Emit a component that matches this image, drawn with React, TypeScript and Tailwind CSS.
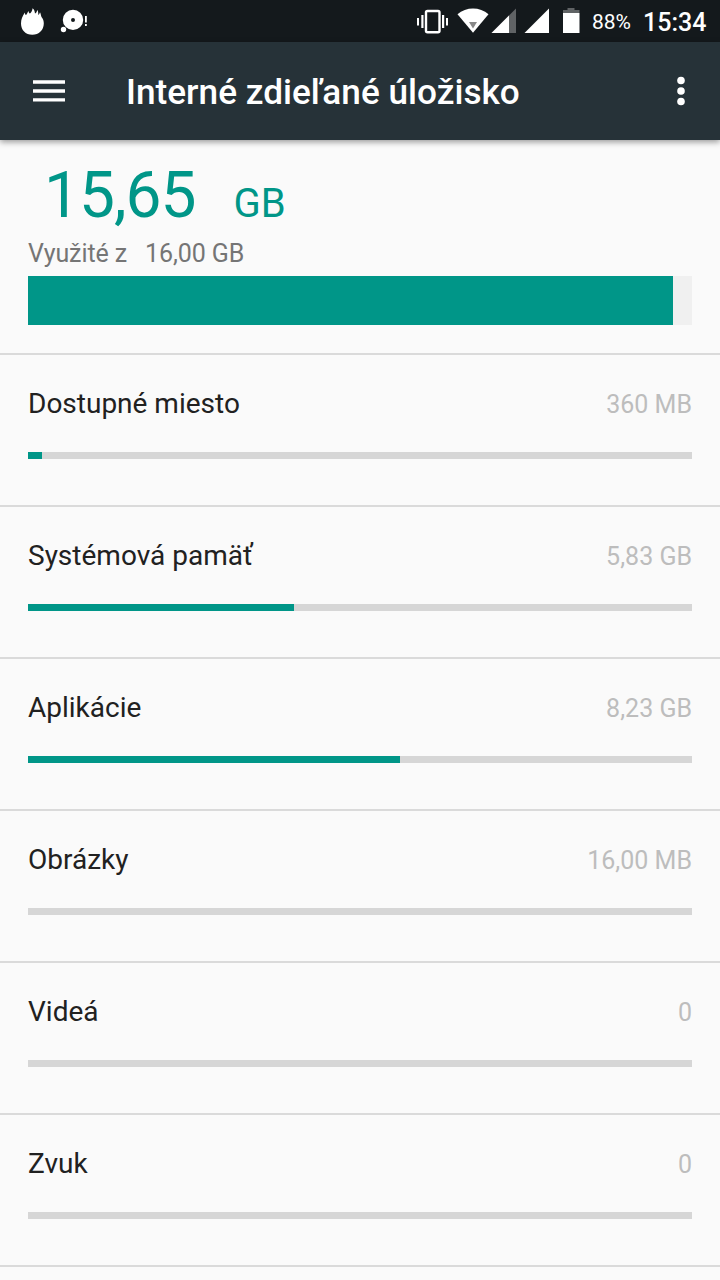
type StorageItem = {
  label: string;
  value: string;
  used: number; // filled part of the bar, in percent
};

const items: StorageItem[] = [
  { label: 'Dostupné miesto', value: '360 MB', used: 2.11 },
  { label: 'Systémová pamäť', value: '5,83 GB', used: 40.06 },
  { label: 'Aplikácie', value: '8,23 GB', used: 56.03 },
  { label: 'Obrázky', value: '16,00 MB', used: 0 },
  { label: 'Videá', value: '0', used: 0 },
  { label: 'Zvuk', value: '0', used: 0 },
];

function StatusBar() {
  return (
    <div className="flex h-[42px] items-center justify-between bg-[#14191c] text-white">
      <svg width="120" height="42" viewBox="0 0 120 42" fill="#fff">
        <path d="M32.3 34.800C25.500 34.800 21 30 21 23.500C21 19 22.500 16.500 24.800 12.500C25 14 25.300 14.800 26 15C27 14 27.500 12.500 28.500 11C28.700 12.500 29.200 13.300 30 13.500C31.500 12.500 32.300 10.500 32.600 8.300C34.200 9.500 34.800 11.500 35 13.500C36.300 13 36.800 11.500 37.500 10C38.300 11.500 38.300 13.500 38.300 15C39.200 14.500 39.700 13.500 40 12.300C41 14 40.800 15.500 41.500 17C43.200 19 43.800 21 43.800 23.500C43.800 30 39 34.800 32.300 34.800Z" />
        <path
          fillRule="evenodd"
          d="M73 9.700a10.200 10.200 0 1 0 0 20.400a10.200 10.200 0 1 0 0-20.400ZM73 17.900a2 2 0 1 1 0 4a2 2 0 1 1 0-4Z"
        />
        <circle cx="63.500" cy="29.500" r="2.700" />
        <path d="M85 16h1.800v6.500h-1.800zM85 24h1.800v2h-1.800z" />
      </svg>
      <div className="flex items-center">
        <svg width="180" height="42" viewBox="410 0 180 42" fill="#fff">
          {/* vibrate */}
          <rect x="426" y="11" width="13.500" height="21.300" rx="1.500" fill="none" stroke="#fff" strokeWidth="2.400" />
          <path d="M417 18h2v7.500h-2zM421.300 15h2.200v13h-2.200zM442 15h2.200v13h-2.200zM446 18h2v7.500h-2z" />
          {/* wifi */}
          <path d="M457.500 14.300C466 6.500 480 6.500 488.500 14.300L473 32.800Z" />
          <path d="M469 22h8l-4 6.500z" fill="#888" />
          {/* sim signals */}
          <path d="M516 8.500V33H491.500Z" fill="#606365" />
          <path d="M509 15.500V33H491.500Z" />
          <path d="M549 8.500V33H524.500Z" />
          {/* battery */}
          <path d="M563 10h4.500V8h7v2h5v3h-16.500z" fill="#606365" />
          <path d="M563 13h16.500v20h-16.500z" />
        </svg>
        <span className="w-[53px] pl-[2px] pt-px text-[21px] leading-[42px]">88%</span>
        <span className="w-[77px] pt-[3px] text-[25px] leading-[40px] font-medium">15:34</span>
      </div>
    </div>
  );
}

function Toolbar() {
  return (
    <header className="relative z-10 flex h-[98px] items-center bg-[#263238] text-white shadow-[0_2px_6px_rgba(0,0,0,0.4)]">
      <svg className="ml-[33px]" width="32" height="24" viewBox="0 0 32 24" fill="#fff">
        <path d="M0 1.300h32v3.400h-32zM0 10.300h32v3.400h-32zM0 19.200h32v3.400h-32z" />
      </svg>
      <h1 className="ml-[61px] flex-1 pt-[3px] text-[35.2px] leading-[41px] font-medium">Interné zdieľané úložisko</h1>
      <svg className="mr-[34px]" width="10" height="30" viewBox="0 0 10 30" fill="#fff">
        <circle cx="5" cy="4.500" r="3.800" />
        <circle cx="5" cy="15" r="3.800" />
        <circle cx="5" cy="25.500" r="3.800" />
      </svg>
    </header>
  );
}

function Summary() {
  return (
    <section className="h-[213px] px-7 pt-5">
      <div className="flex h-[72px] items-baseline pl-4 leading-[72px] text-[#009688]">
        <span className="text-[64px] tracking-[-1px]">15,65</span>
        <span className="ml-[38px] text-[40px]">GB</span>
      </div>
      <div className="mt-[6px] flex h-8 gap-[18px] text-[25px] leading-8 tracking-[-0.1px] text-[#757575]">
        <span>Využité z</span>
        <span>16,00 GB</span>
      </div>
      <div className="mt-[6px] h-[49px] bg-[#f0f0f0]">
        <div className="h-full w-[645px] bg-[#009688]" />
      </div>
    </section>
  );
}

function StorageRow({ label, value, used }: StorageItem) {
  return (
    <li className="h-[152px] shrink-0 border-t-2 border-[#dadada] px-7 pt-[33px]">
      <div className="flex h-8 justify-between leading-8">
        <span className="text-[28px] text-[#212121]">{label}</span>
        <span className="pt-px text-[25px] text-[#bdbdbd]">{value}</span>
      </div>
      <div className="mt-8 h-[7px] bg-[#d6d6d6]">
        <div className="h-full bg-[#009688]" style={{ width: `${used}%` }} />
      </div>
    </li>
  );
}

export default function App() {
  return (
    <div className="flex h-[1280px] w-[720px] flex-col overflow-hidden bg-[#fafafa] font-['Roboto',sans-serif]">
      <StatusBar />
      <Toolbar />
      <Summary />
      <ul className="flex flex-col">
        {items.map((item) => (
          <StorageRow key={item.label} {...item} />
        ))}
        <li className="border-t-2 border-[#dadada]" />
      </ul>
    </div>
  );
}
